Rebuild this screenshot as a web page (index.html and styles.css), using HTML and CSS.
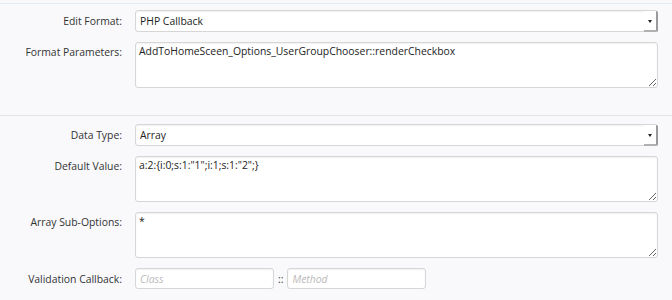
FILE: index.html
```html
<!DOCTYPE html>
<html lang="en">
<head>
    <meta charset="UTF-8">
    <title>Option Settings</title>
    <link rel="stylesheet" href="styles.css">
</head>
<body>
    <div class="page">
        <div class="section">
            <div class="row">
                <label class="label" for="editFormat">Edit Format:</label>
                <div class="field select-wrap">
                    <select id="editFormat" class="select">
                        <option>PHP Callback</option>
                    </select>
                </div>
            </div>
            <div class="row">
                <label class="label label-area" for="formatParams">Format Parameters:</label>
                <div class="field">
                    <textarea id="formatParams" class="textarea">AddToHomeSceen_Options_UserGroupChooser::renderCheckbox</textarea>
                </div>
            </div>
        </div>

        <div class="section">
            <div class="row">
                <label class="label" for="dataType">Data Type:</label>
                <div class="field select-wrap">
                    <select id="dataType" class="select">
                        <option>Array</option>
                    </select>
                </div>
            </div>
            <div class="row">
                <label class="label label-area" for="defaultValue">Default Value:</label>
                <div class="field">
                    <textarea id="defaultValue" class="textarea">a:2:{i:0;s:1:"1";i:1;s:1:"2";}</textarea>
                </div>
            </div>
            <div class="row">
                <label class="label label-area" for="subOptions">Array Sub-Options:</label>
                <div class="field">
                    <textarea id="subOptions" class="textarea">*</textarea>
                </div>
            </div>
            <div class="row">
                <label class="label" for="callbackClass">Validation Callback:</label>
                <div class="field callback">
                    <input type="text" id="callbackClass" class="input" placeholder="Class">
                    <span class="sep">::</span>
                    <input type="text" id="callbackMethod" class="input" placeholder="Method">
                </div>
            </div>
        </div>
    </div>
</body>
</html>
```

FILE: styles.css
```css
body {
    margin: 0;
    background-color: #f9f9fb;
    font-family: "Open Sans", Arial, sans-serif;
    font-size: 10.4px;
    color: #222;
}
.page {
    border-top: 1px solid #e2eef8;
    margin-top: 3px;
}
.section {
    padding: 6px 0 17px;
}
.section + .section {
    border-top: 1px solid #e4e4e8;
    padding-top: 8px;
}
.row {
    display: flex;
    align-items: flex-start;
    margin-bottom: 10px;
}
.label {
    width: 122px;
    padding-right: 13px;
    text-align: right;
    color: #333;
    line-height: 22px;
    flex-shrink: 0;
}
.label-area {
    line-height: 20px;
}
.field {
    flex: 1;
    margin-right: 14px;
}
.select-wrap {
    position: relative;
}
.select {
    appearance: none;
    -webkit-appearance: none;
    width: 100%;
    height: 22px;
    padding: 0 4px;
    border: 1px solid #d6d6d6;
    border-radius: 3px;
    background: #fff;
    font-family: inherit;
    font-size: 10.4px;
    color: #222;
    box-shadow: inset 0 1px 2px rgba(0, 0, 0, 0.06);
}
.select-wrap::after {
    content: "";
    position: absolute;
    right: 0;
    top: 1px;
    width: 12px;
    height: 19px;
    border-right: 2px solid #9a9a9a;
    border-bottom: 2px solid #b0b0b0;
    border-radius: 0 2px 2px 0;
    background: #fff;
}
.select-wrap::before {
    content: "";
    position: absolute;
    right: 6px;
    top: 10px;
    border-left: 2.5px solid transparent;
    border-right: 2.5px solid transparent;
    border-top: 3px solid #222;
    z-index: 1;
}
.textarea {
    display: block;
    width: 100%;
    height: 46px;
    box-sizing: border-box;
    padding: 1px 3px;
    border: 1px solid #d6d6d6;
    border-radius: 3px;
    background: #fff;
    font-family: inherit;
    font-size: 10.4px;
    line-height: 14px;
    color: #222;
    box-shadow: inset 0 1px 2px rgba(0, 0, 0, 0.06);
    resize: vertical;
}
.callback {
    display: flex;
    align-items: center;
}
.input {
    width: 139px;
    height: 21px;
    box-sizing: border-box;
    padding: 0 4px;
    border: 1px solid #d6d6d6;
    border-radius: 3px;
    background: #fff;
    font-family: inherit;
    font-size: 10.4px;
    box-shadow: inset 0 1px 2px rgba(0, 0, 0, 0.06);
}
.input::placeholder {
    color: #bbb;
    font-style: italic;
}
.sep {
    margin: 0 4px;
    color: #333;
}
```
